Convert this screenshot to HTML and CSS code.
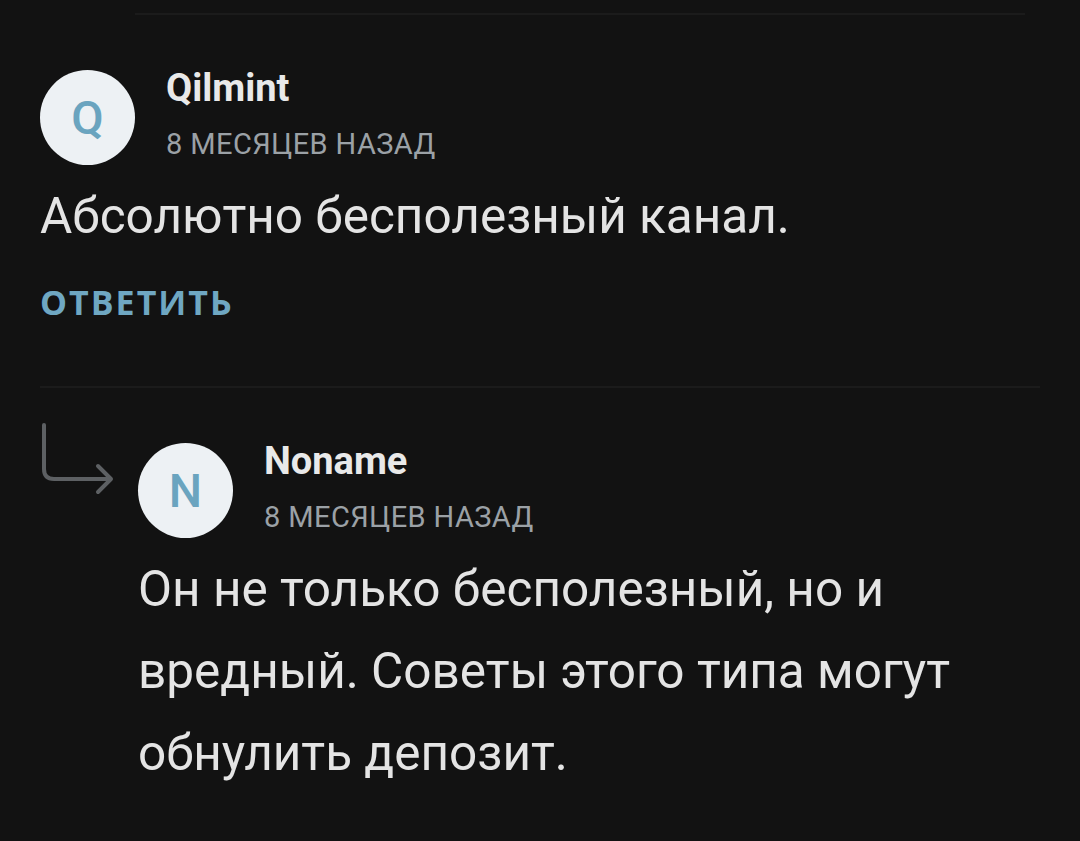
FILE: index.html
```html
<!DOCTYPE html>
<html lang="ru">
   <head>
      <meta charset="UTF-8"/>
      <title>Комментарии</title>
      <link rel="stylesheet" href="styles.css">
   </head>

   <body>
      <div class="thread">
         <div class="rule rule-nested"></div>

         <div class="comment comment-top">
            <div class="comment-head">
               <div class="avatar">Q</div>
               <div class="meta">
                  <div class="author">Qilmint</div>
                  <div class="date">8 месяцев назад</div>
               </div>
            </div>
            <p class="text">Абсолютно бесполезный канал.</p>
            <a class="reply-link" href="#">Ответить</a>
         </div>

         <div class="rule"></div>

         <div class="reply">
            <svg class="reply-arrow" width="76" height="74" viewBox="0 0 76 74">
               <path d="M4 2 V46 Q4 56 14 56 H71 M58 43 L71 56 L58 69"
                     fill="none" stroke="#5d6063" stroke-width="4" stroke-linecap="round" stroke-linejoin="round"/>
            </svg>

            <div class="comment">
               <div class="comment-head">
                  <div class="avatar">N</div>
                  <div class="meta">
                     <div class="author">Noname</div>
                     <div class="date">8 месяцев назад</div>
                  </div>
               </div>
               <p class="text">Он не только бесполезный, но и вредный. Советы этого типа могут обнулить депозит.</p>
            </div>
         </div>
      </div>
   </body>
</html>
```

FILE: styles.css
```css
html, body { margin: 0; padding: 0; }

body {
   background: #121212;
   color: #e4e4e4;
   font-family: Roboto, "Noto Sans", sans-serif;
}

.thread {
   padding: 0 40px;
}

.rule {
   height: 2px;
   background: #1b1b1b;
}

.rule-nested {
   margin: 13px 15px 0 95px;
}

/* avatar + author/date */
.comment-head {
   display: flex;
   align-items: flex-start;
   gap: 31px;
}

.comment-top {
   padding-top: 55px;
   padding-bottom: 61px;
}

.avatar {
   flex: none;
   width: 95px;
   height: 95px;
   border-radius: 50%;
   background: #edf1f4;
   color: #6aa4bf;
   display: flex;
   align-items: center;
   justify-content: center;
   font-size: 47px;
   font-weight: 500;
}

.meta {
   display: flex;
   flex-direction: column;
   gap: 17px;
   margin-top: -4px;
}

.author {
   font-size: 38px;
   font-weight: 700;
   color: #e9e9e9;
}

.date {
   font-size: 29px;
   letter-spacing: 0.4px;
   text-transform: uppercase;
   color: #9ba1a6;
}

.text {
   margin: 10px 0 0;
   font-size: 49.5px;
   line-height: 82px;
   color: #e4e4e4;
}

.reply-link {
   display: block;
   width: max-content;
   margin-top: 22px;
   font-family: "Open Sans", sans-serif;
   font-weight: 700;
   font-size: 34px;
   letter-spacing: 2px;
   text-transform: uppercase;
   text-decoration: none;
   color: #6fa7c2;
}

/* nested answer with the turn arrow on the left */
.reply {
   display: flex;
   gap: 22px;
}

.reply-arrow {
   flex: none;
   margin-top: 35px;
   overflow: visible;
}

.reply .comment {
   flex: 1;
   padding-top: 55px;
}
```
